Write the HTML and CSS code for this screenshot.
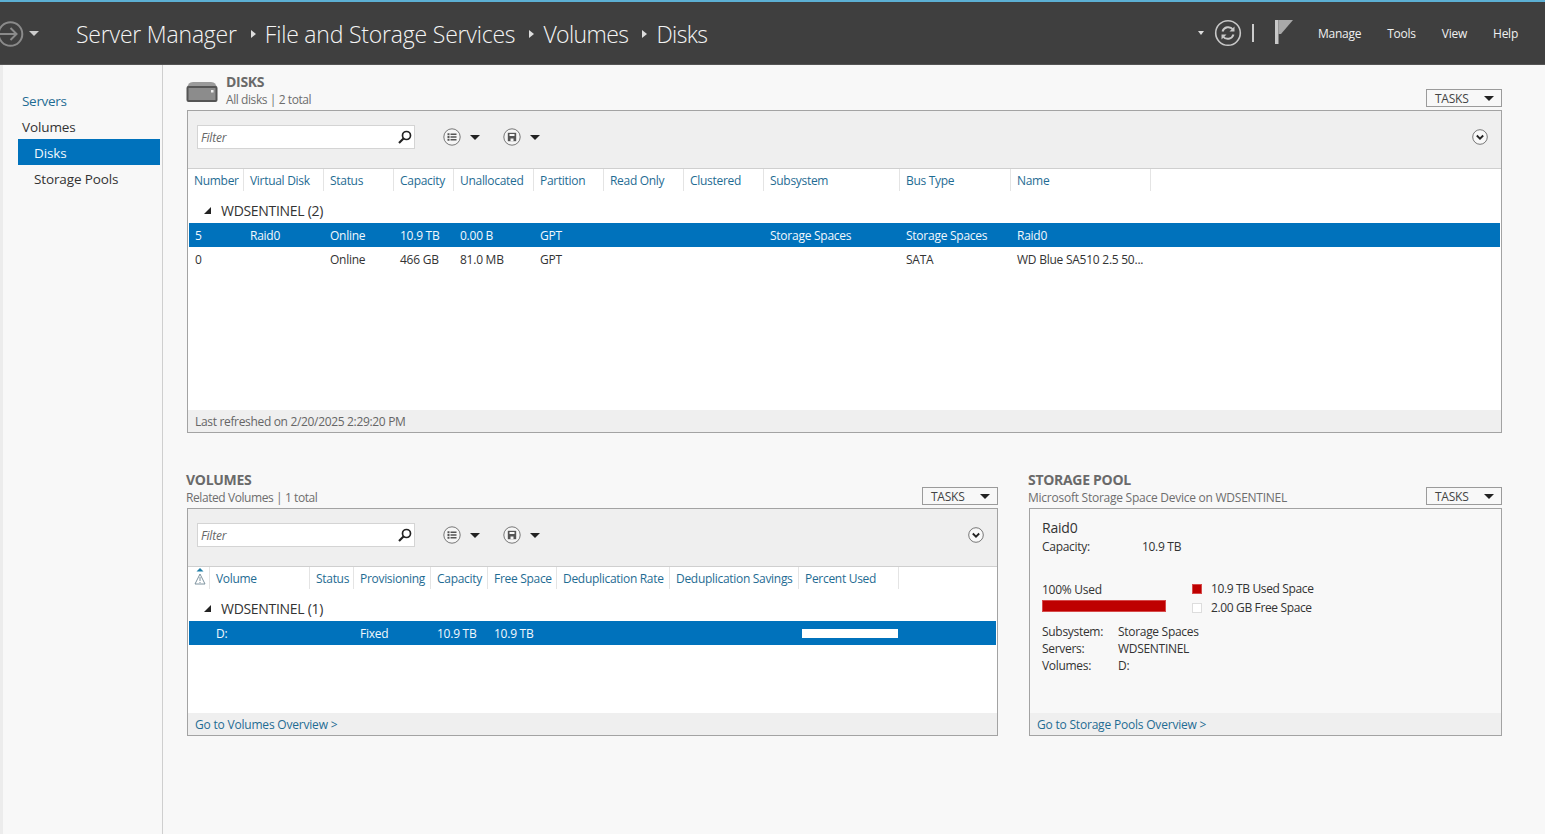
FILE: index.html
```html
<!DOCTYPE html>
<html lang="en">
<head>
<meta charset="utf-8">
<title>Server Manager</title>
<link rel="stylesheet" href="styles.css">
</head>
<body>
<header class="topbar">
  <div class="nav-back">
    <svg class="back-icon" width="26" height="26" viewBox="0 0 26 26"><circle cx="10.500" cy="13" r="11.800" fill="none" stroke="#8a8a8a" stroke-width="2"/><path d="M0 13h16M10.500 7l6 6-6 6" fill="none" stroke="#8a8a8a" stroke-width="2"/></svg>
    <span class="caret caret-light"></span>
  </div>
  <nav class="crumbs">
    <span>Server Manager</span><i class="sep"></i><span>File and Storage Services</span><i class="sep"></i><span class="crumb-short">Volumes</span><i class="sep"></i><span class="crumb-short">Disks</span>
  </nav>
  <div class="top-tools">
    <span class="caret caret-small"></span>
    <svg class="refresh" width="28" height="28" viewBox="0 0 28 28"><circle cx="14" cy="14" r="12.300" fill="none" stroke="#c8c8c8" stroke-width="1.600"/><path d="M8.500 12.500a6 6 0 0 1 10.500-2" fill="none" stroke="#c8c8c8" stroke-width="2"/><path d="M20.500 7.500v5h-5z" fill="#c8c8c8"/><path d="M19.500 15.500a6 6 0 0 1-10.500 2" fill="none" stroke="#c8c8c8" stroke-width="2"/><path d="M7.500 20.500v-5h5z" fill="#c8c8c8"/></svg>
    <span class="bar"></span>
    <svg class="flag" width="18" height="24" viewBox="0 0 18 24"><path d="M0 0h3.500v24H0z" fill="#c8c8c8"/><path d="M3.500 0H18L6 14H3.500z" fill="#a8a8a8"/></svg>
    <a class="menu m-first">Manage</a><a class="menu">Tools</a><a class="menu">View</a><a class="menu">Help</a>
  </div>
</header>
<div class="shell">
  <aside class="side">
    <a class="side-item link">Servers</a>
    <a class="side-item">Volumes</a>
    <a class="side-item sub active">Disks</a>
    <a class="side-item sub">Storage Pools</a>
  </aside>
  <main class="main">
    <section class="sec sec-disks">
      <div class="sec-head">
        <svg class="disk" width="32" height="20" viewBox="0 0 32 20"><path d="M3 1.500Q4 0 7 0h18q3 0 4 1.500L31 5H1z" fill="#9a9a9a"/><rect x=".5" y="4" width="31" height="16" rx="2" fill="#555"/><rect x="2.500" y="6" width="27" height="12" fill="#8c8c8c"/><rect x="25" y="8" width="2.500" height="2.500" fill="#eee"/></svg>
        <div class="sec-titles"><h2>DISKS</h2><p class="tight">All disks | 2 total</p></div>
        <button class="tasks">TASKS<span class="caret"></span></button>
      </div>
      <div class="panel panel-disks">
        <div class="toolbar">
          <div class="filter"><em>Filter</em><svg width="14" height="14" viewBox="0 0 14 14"><circle cx="8.500" cy="5.500" r="4" fill="none" stroke="#222" stroke-width="1.700"/><path d="M5.500 8.500L1 13" stroke="#222" stroke-width="2.200"/></svg></div>
          <svg class="tb-ico" width="18" height="18" viewBox="0 0 18 18"><circle cx="9" cy="9" r="8.200" fill="#f6f6f6" stroke="#777"/><path d="M4.500 5.200h2v2h-2zM4.500 8h2v2h-2zM4.500 10.800h2v2h-2zM7.500 5.500H13.500v1.400H7.500zM7.500 8.300H13.500v1.400H7.500zM7.500 11.100H13.500v1.400H7.500z" fill="#555"/></svg><span class="caret"></span>
          <svg class="tb-ico tb-save" width="18" height="18" viewBox="0 0 18 18"><circle cx="9" cy="9" r="8.200" fill="#f6f6f6" stroke="#777"/><path d="M4.800 4.800h8.400v8.400H4.800z" fill="#555"/><path d="M6.500 6h5v2h-5zM7.500 10.500h3v2.700h-3z" fill="#f6f6f6"/></svg><span class="caret"></span>
          <svg class="expander" width="16" height="16" viewBox="0 0 16 16"><circle cx="8" cy="8" r="7.300" fill="#f8f8f8" stroke="#777"/><path d="M4.800 6.500L8 9.700l3.200-3.200" fill="none" stroke="#222" stroke-width="1.800"/></svg>
        </div>
        <div class="list">
          <div class="row head cols-disks">
            <span>Number</span><span>Virtual Disk</span><span>Status</span><span>Capacity</span><span>Unallocated</span><span>Partition</span><span>Read Only</span><span>Clustered</span><span>Subsystem</span><span>Bus Type</span><span>Name</span>
          </div>
          <div class="group"><i class="tri"></i>WDSENTINEL (2)</div>
          <div class="row data sel cols-disks">
            <span>5</span><span>Raid0</span><span>Online</span><span>10.9 TB</span><span>0.00 B</span><span>GPT</span><span></span><span></span><span>Storage Spaces</span><span>Storage Spaces</span><span>Raid0</span>
          </div>
          <div class="row data cols-disks">
            <span>0</span><span></span><span>Online</span><span>466 GB</span><span>81.0 MB</span><span>GPT</span><span></span><span></span><span></span><span>SATA</span><span>WD Blue SA510 2.5 50...</span>
          </div>
        </div>
        <div class="foot stamp">Last refreshed on 2/20/2025 2:29:20 PM</div>
      </div>
    </section>
    <div class="lower">
      <section class="sec sec-vol">
        <div class="sec-head">
          <div class="sec-titles"><h2>VOLUMES</h2><p class="tight">Related Volumes | 1 total</p></div>
          <button class="tasks">TASKS<span class="caret"></span></button>
        </div>
        <div class="panel panel-lower">
          <div class="toolbar">
            <div class="filter"><em>Filter</em><svg width="14" height="14" viewBox="0 0 14 14"><circle cx="8.500" cy="5.500" r="4" fill="none" stroke="#222" stroke-width="1.700"/><path d="M5.500 8.500L1 13" stroke="#222" stroke-width="2.200"/></svg></div>
            <svg class="tb-ico" width="18" height="18" viewBox="0 0 18 18"><circle cx="9" cy="9" r="8.200" fill="#f6f6f6" stroke="#777"/><path d="M4.500 5.200h2v2h-2zM4.500 8h2v2h-2zM4.500 10.800h2v2h-2zM7.500 5.500H13.500v1.400H7.500zM7.500 8.300H13.500v1.400H7.500zM7.500 11.100H13.500v1.400H7.500z" fill="#555"/></svg><span class="caret"></span>
            <svg class="tb-ico tb-save" width="18" height="18" viewBox="0 0 18 18"><circle cx="9" cy="9" r="8.200" fill="#f6f6f6" stroke="#777"/><path d="M4.800 4.800h8.400v8.400H4.800z" fill="#555"/><path d="M6.500 6h5v2h-5zM7.500 10.500h3v2.700h-3z" fill="#f6f6f6"/></svg><span class="caret"></span>
            <svg class="expander" width="16" height="16" viewBox="0 0 16 16"><circle cx="8" cy="8" r="7.300" fill="#f8f8f8" stroke="#777"/><path d="M4.800 6.500L8 9.700l3.200-3.200" fill="none" stroke="#222" stroke-width="1.800"/></svg>
          </div>
          <div class="list">
            <div class="row head cols-vol">
              <span class="warn"><svg width="12" height="17" viewBox="0 0 12 17"><path d="M2.500 3.500L6 0l3.500 3.500z" fill="#1f7fa8"/><path d="M6 6l5 10H1z" fill="none" stroke="#7d929e"/><path d="M5.500 9h1v4h-1zM5.500 14h1v1h-1z" fill="#7d929e"/></svg></span><span>Volume</span><span>Status</span><span>Provisioning</span><span>Capacity</span><span>Free Space</span><span>Deduplication Rate</span><span>Deduplication Savings</span><span>Percent Used</span>
            </div>
            <div class="group"><i class="tri"></i>WDSENTINEL (1)</div>
            <div class="row data sel cols-vol">
              <span></span><span>D:</span><span></span><span>Fixed</span><span>10.9 TB</span><span>10.9 TB</span><span></span><span></span><span class="pct"><i></i></span>
            </div>
          </div>
          <div class="foot link">Go to Volumes Overview &gt;</div>
        </div>
      </section>
      <section class="sec sec-pool">
        <div class="sec-head">
          <div class="sec-titles"><h2>STORAGE POOL</h2><p>Microsoft Storage Space Device on WDSENTINEL</p></div>
          <button class="tasks">TASKS<span class="caret"></span></button>
        </div>
        <div class="panel panel-lower pool">
          <div class="pool-body">
            <div class="pool-name">Raid0</div>
            <div class="pool-cap"><span>Capacity:</span><span>10.9 TB</span></div>
            <div class="usage">
              <div class="usage-left"><div class="used-label">100% Used</div><div class="used-bar"></div></div>
              <div class="legend">
                <div class="leg"><i class="sw red"></i>10.9 TB Used Space</div>
                <div class="leg"><i class="sw"></i>2.00 GB Free Space</div>
              </div>
            </div>
            <dl class="facts">
              <dt>Subsystem:</dt><dd>Storage Spaces</dd>
              <dt>Servers:</dt><dd>WDSENTINEL</dd>
              <dt>Volumes:</dt><dd>D:</dd>
            </dl>
          </div>
          <div class="foot link">Go to Storage Pools Overview &gt;</div>
        </div>
      </section>
    </div>
  </main>
</div>
</body>
</html>
```

FILE: styles.css
```css
* { box-sizing: border-box; }
html, body { margin: 0; height: 100%; }
body {
  height: 834px;
  overflow: hidden;
  display: flex;
  flex-direction: column;
  font-family: "Open Sans", "Noto Sans", sans-serif;
  font-size: 12px;
  color: #333;
  background: #f8f8f8;
}
.topbar {
  height: 65px;
  flex: none;
  display: flex;
  align-items: center;
  background: #3f3f3f;
  border-top: 2px solid #5cb0d4;
  border-bottom: 1px solid #555;
  color: #f4f4f4;
}
.nav-back { width: 76px; display: flex; align-items: center; gap: 5px; flex: none; padding-top: 1px; }
.caret {
  display: inline-block;
  width: 0; height: 0;
  border-left: 5px solid transparent;
  border-right: 5px solid transparent;
  border-top: 5px solid #222;
}
.caret-light { border-top-color: #ccc; margin-left: -2px; }
.caret-small { border-left-width: 3.500px; border-right-width: 3.500px; border-top: 4px solid #ddd; }
.crumbs { display: flex; align-items: center; font-size: 23px; font-weight: 300; letter-spacing: -.2px; white-space: nowrap; padding-top: 1px; }
.crumb-short { letter-spacing: -.6px; }
.sep {
  width: 0; height: 0; margin: 0 9px 0 14px;
  border-top: 4px solid transparent;
  border-bottom: 4px solid transparent;
  border-left: 5px solid #ddd;
}
.top-tools { margin-left: auto; display: flex; align-items: center; padding-right: 27px; }
.refresh { margin: 0 10px; }
.bar { width: 2px; height: 18px; background: #ccc; }
.flag { margin: -3px 0 0 21px; }
.menu { font-size: 12px; color: #f0f0f0; margin-left: 26px; letter-spacing: -.25px; }
.m-first { margin-left: 25px; }
.shell { flex: 1; display: flex; min-height: 0; }
.side {
  width: 163px; flex: none;
  padding-top: 22px;
  background: #f8f8f8;
  border-left: 3px solid #ececec;
  border-right: 1px solid #cfcfcf;
  font-size: 13.500px;
  letter-spacing: -.12px;
}
.side-item { display: flex; align-items: center; height: 26px; margin: 0 2px 0 15px; padding: 2px 0 0 4px; }
.side-item.link { color: #1f6c93; letter-spacing: -.3px; }
.side-item.sub { padding-left: 16px; }
.side-item.active { background: #0072bc; color: #f2f8fc; }
.main { flex: 1; min-width: 0; padding: 9px 43px 0 23px; }
.sec-head { display: flex; align-items: flex-end; height: 36px; }
.disk { margin: 0 8px 8px 0; flex: none; }
.sec-titles { flex: 1; min-width: 0; }
.sec-titles h2 { margin: 0; font-size: 14px; font-weight: 700; line-height: 16px; color: #6a6a6a; letter-spacing: -.3px; }
.sec-titles p { margin: 2px 0 3px; font-size: 12px; line-height: 15px; color: #6e6e6e; letter-spacing: -.25px; white-space: nowrap; }
.sec-titles p.tight { letter-spacing: -.42px; }
.tasks {
  width: 76px; height: 18px; flex: none;
  margin: 0 0 3px;
  padding: 0 7px 0 8px;
  display: flex; align-items: center; justify-content: space-between;
  background: #f8f8f8;
  border: 1px solid #9b9b9b;
  font: 12px "Open Sans", sans-serif;
  color: #444;
  letter-spacing: -.25px;
}
.panel {
  margin-left: 1px;
  border: 1px solid #a3a3a3;
  background: #fff;
  display: flex; flex-direction: column;
}
.panel-disks { height: 323px; }
.panel-lower { height: 228px; }
.toolbar {
  height: 58px; flex: none;
  display: flex; align-items: flex-start;
  padding: 14px 13px 0 9px;
  background: #efefef;
  border-bottom: 1px solid #cfcfcf;
}
.filter {
  width: 218px; height: 24px;
  display: flex; align-items: center; justify-content: space-between;
  padding: 0 2px 0 3px;
  background: #fff;
  border: 1px solid #d4d4d4;
  color: #666;
  font-size: 12px;
}
.filter em { letter-spacing: -.2px; }
.tb-ico { margin: 3px 9px 0 28px; }
.tb-save { margin-left: 23px; }
.toolbar .caret { margin-top: 10px; }
.expander { margin: 4px 0 0 auto; }
.list { flex: 1; min-height: 0; padding: 0 1px; }
.row { display: grid; }
.cols-disks { grid-template-columns: 55px 80px 70px 60px 80px 70px 80px 80px 136px 111px 140px 1fr; }
.cols-vol { grid-template-columns: 21px 100px 44px 77px 57px 69px 113px 129px 100px 1fr; }
.head { height: 25px; align-items: start; }
.head span {
  height: 22px; padding: 3px 0 0 6px;
  color: #1f6c93;
  border-right: 1px solid #e4e4e4;
  letter-spacing: -.3px;
  white-space: nowrap;
}
.head span:first-child { padding-left: 5px; }
.head .warn { padding: 1px 0 0 4px; }
.group {
  height: 29px;
  display: flex; align-items: center;
  padding: 3px 0 0 15px;
  font-size: 14px;
  color: #333;
  letter-spacing: -.3px;
}
.tri {
  width: 0; height: 0; margin-right: 10px;
  border-left: 7px solid transparent;
  border-bottom: 7px solid #222;
}
.data { height: 24px; align-items: center; color: #333; letter-spacing: -.25px; white-space: nowrap; }
.data span { padding-left: 6px; }
.sel { background: #0072bc; color: #f2f8fc; }
.data .pct { padding-left: 3px; }
.pct i { display: block; width: 96px; height: 9px; background: #fff; }
.foot {
  height: 22px; flex: none;
  display: flex; align-items: center;
  padding-left: 7px;
  background: #efefef;
  color: #666;
  letter-spacing: -.2px;
}
.foot.stamp { letter-spacing: -.33px; }
.foot.link { color: #1f6c93; }
.lower { display: flex; gap: 30px; margin-top: 39px; }
.sec-vol { width: 812px; flex: none; }
.sec-pool { flex: 1; min-width: 0; }
.pool { background: #f8f8f8; }
.pool-body { flex: 1; padding: 9px 12px 0; }
.pool-name { font-size: 14px; line-height: 20px; letter-spacing: -.2px; }
.pool-cap { display: flex; line-height: 18px; letter-spacing: -.3px; }
.pool-cap span:first-child { width: 100px; }
.usage { display: flex; margin-top: 26px; }
.usage-left { width: 150px; }
.used-label { line-height: 16px; letter-spacing: -.25px; }
.used-bar { width: 124px; height: 12px; margin-top: 2px; background: #be0000; border: 1px solid #d64a4a; }
.legend { margin-top: -3px; }
.leg { display: flex; align-items: center; height: 19px; letter-spacing: -.36px; }
.sw { width: 10px; height: 10px; margin-right: 9px; background: #fff; border: 1px solid #ddd; }
.sw.red { background: #be0000; border-color: #d64a4a; }
.facts { display: grid; grid-template-columns: 76px 1fr; margin: 6px 0 0; line-height: 17px; letter-spacing: -.3px; }
.facts dd { margin: 0; }
```
